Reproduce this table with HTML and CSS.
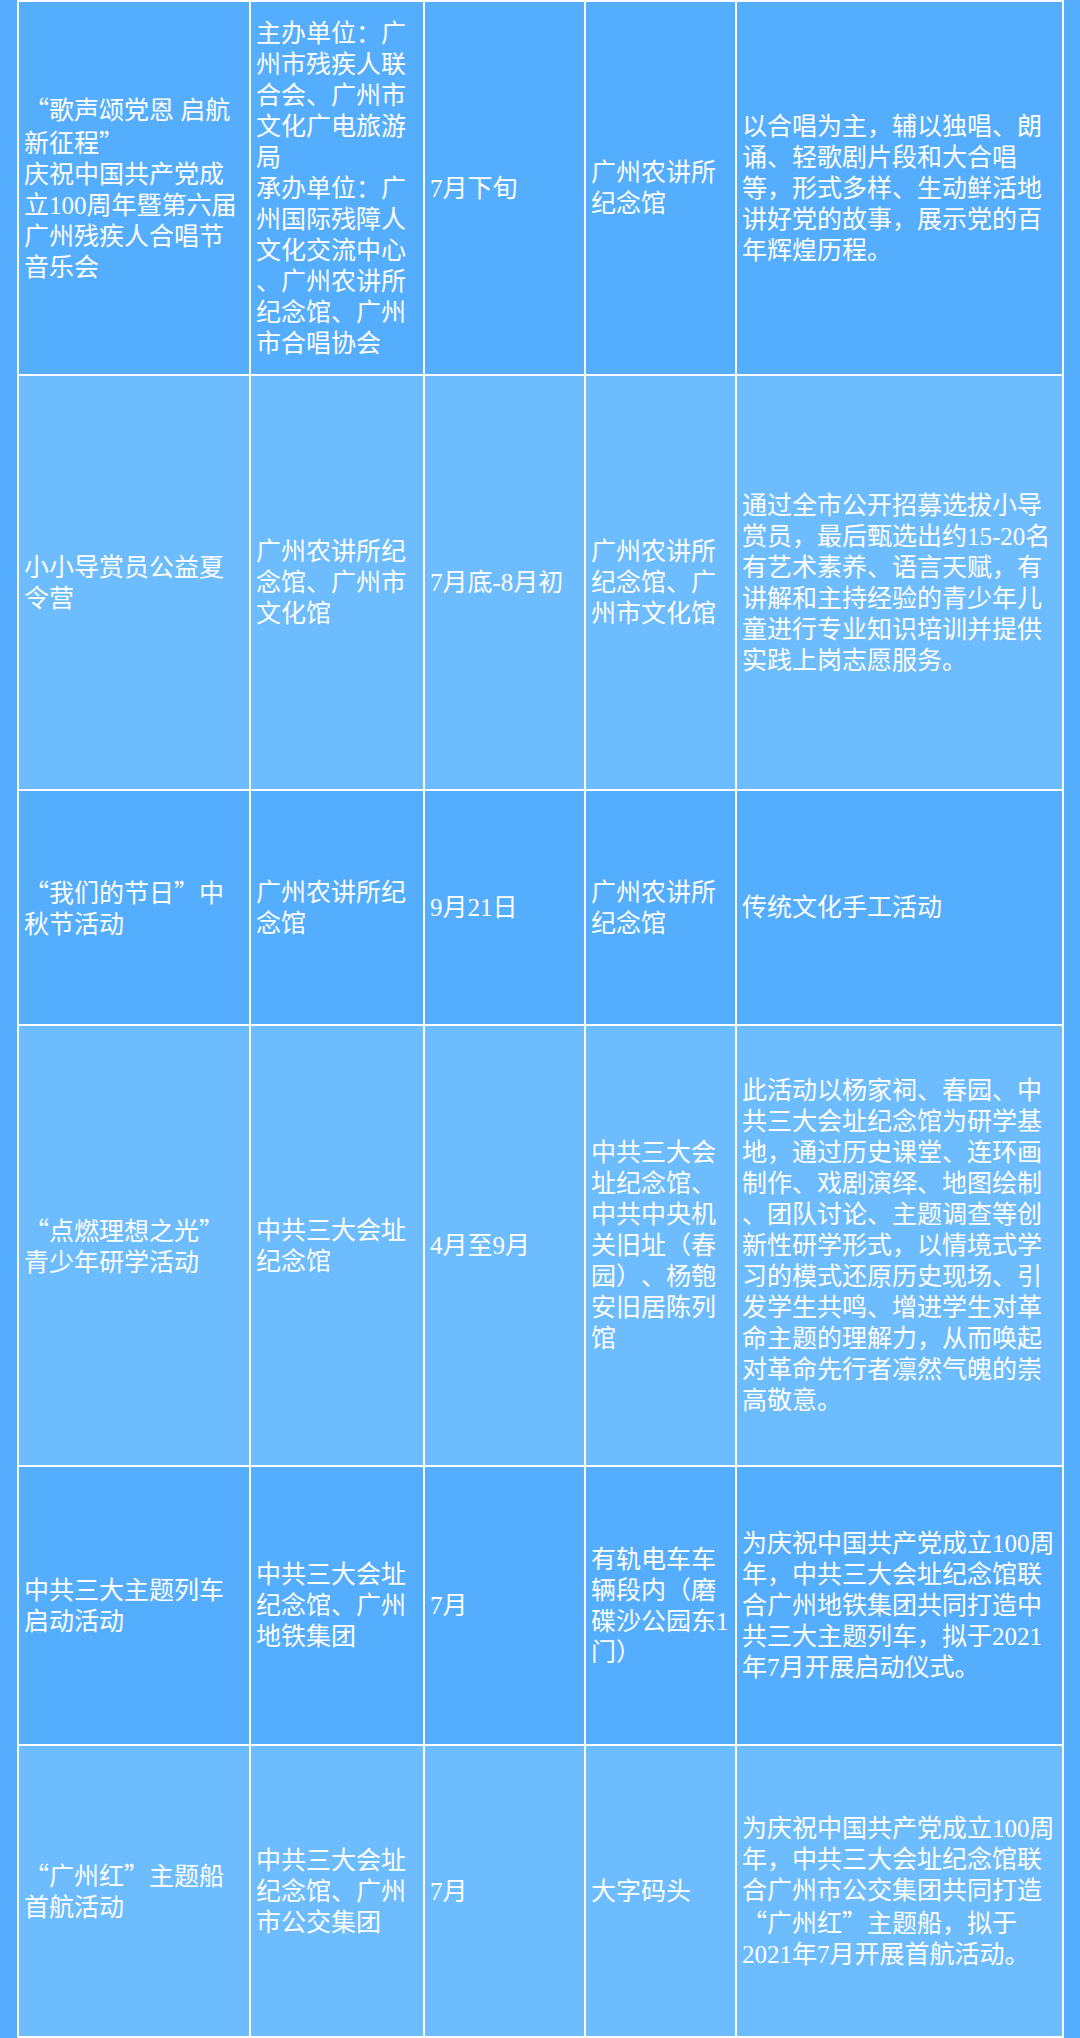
FILE: index.html
```html
<!DOCTYPE html>
<html lang="zh-CN">
<head>
<meta charset="utf-8">
<title>活动安排</title>
<link rel="stylesheet" href="styles.css">
</head>
<body>
<table class="plan">
  <colgroup>
    <col class="c-name">
    <col class="c-org">
    <col class="c-time">
    <col class="c-place">
    <col class="c-desc">
  </colgroup>
  <tbody>
    <tr class="row r1 dark">
      <td><span class="q">“</span>歌声颂党恩 启航新征程<span class="q">”</span><br>庆祝中国共产党成立100周年暨第六届广州残疾人合唱节音乐会</td>
      <td class="loose">主办单位：广州市残疾人联合会、广州市文化广电旅游局<br>承办单位：广州国际残障人文化交流中心、广州农讲所纪念馆、广州市合唱协会</td>
      <td>7月下旬</td>
      <td>广州农讲所纪念馆</td>
      <td>以合唱为主，辅以独唱、朗诵、轻歌剧片段和大合唱等，形式多样、生动鲜活地讲好党的故事，展示党的百年辉煌历程。</td>
    </tr>
    <tr class="row r2 light">
      <td>小小导赏员公益夏令营</td>
      <td>广州农讲所纪念馆、广州市文化馆</td>
      <td>7月底-8月初</td>
      <td>广州农讲所纪念馆、广州市文化馆</td>
      <td>通过全市公开招募选拔小导赏员，最后甄选出约15-20名有艺术素养、语言天赋，有讲解和主持经验的青少年儿童进行专业知识培训并提供实践上岗志愿服务。</td>
    </tr>
    <tr class="row r3 dark">
      <td><span class="q">“</span>我们的节日<span class="q">”</span>中秋节活动</td>
      <td>广州农讲所纪念馆</td>
      <td>9月21日</td>
      <td>广州农讲所纪念馆</td>
      <td>传统文化手工活动</td>
    </tr>
    <tr class="row r4 light">
      <td><span class="q">“</span>点燃理想之光<span class="q">”</span>青少年研学活动</td>
      <td>中共三大会址纪念馆</td>
      <td>4月至9月</td>
      <td class="loose">中共三大会址纪念馆、中共中央机关旧址（春园）、杨匏安旧居陈列馆</td>
      <td class="loose">此活动以杨家祠、春园、中共三大会址纪念馆为研学基地，通过历史课堂、连环画制作、戏剧演绎、地图绘制、团队讨论、主题调查等创新性研学形式，以情境式学习的模式还原历史现场、引发学生共鸣、增进学生对革命主题的理解力，从而唤起对革命先行者凛然气魄的崇高敬意。</td>
    </tr>
    <tr class="row r5 dark">
      <td>中共三大主题列车启动活动</td>
      <td>中共三大会址纪念馆、广州地铁集团</td>
      <td>7月</td>
      <td class="loose">有轨电车车辆段内（磨碟沙公园东1门）</td>
      <td>为庆祝中国共产党成立100周年，中共三大会址纪念馆联合广州地铁集团共同打造中共三大主题列车，拟于2021年7月开展启动仪式。</td>
    </tr>
    <tr class="row r6 light">
      <td><span class="q">“</span>广州红<span class="q">”</span>主题船首航活动</td>
      <td>中共三大会址纪念馆、广州市公交集团</td>
      <td>7月</td>
      <td>大字码头</td>
      <td>为庆祝中国共产党成立100周年，中共三大会址纪念馆联合广州市公交集团共同打造<span class="q">“</span>广州红<span class="q">”</span>主题船，拟于<span class="keep">2021年</span>7月开展首航活动。</td>
    </tr>
  </tbody>
</table>
</body>
</html>
```

FILE: styles.css
```css
html, body {
  margin: 0;
  padding: 0;
}

body {
  background: #54aefd;
  padding-left: 17px;
  font-family: "Liberation Serif", "Noto Sans CJK SC", serif;
}

.plan {
  width: 1047px;
  table-layout: fixed;
  border-collapse: separate;
  border-spacing: 2px;
  background: #ffffff;
  color: #ffffff;
  font-size: 25px;
  line-height: 31px;
  text-spacing-trim: space-all;
}

.c-name { width: 230px; }
.c-org { width: 172px; }
.c-time { width: 159px; }
.c-place { width: 149px; }
.c-desc { width: 325px; }

.plan td {
  padding: 0 3px 0 5px;
  vertical-align: middle;
  text-align: left;
  overflow: hidden;
  text-spacing-trim: space-all;
}

.dark td { background: #54aefd; }
.light td { background: #6dbcfe; }

.r1 td { height: 372px; }
.r2 td { height: 413px; }
.r3 td { height: 233px; }
.r4 td { height: 439px; }
.r5 td { height: 277px; }
.r6 td { height: 290px; }

.loose {
  line-break: anywhere;
}

.q {
  font-family: "Noto Sans CJK SC", sans-serif;
}

.keep {
  white-space: nowrap;
}
```
